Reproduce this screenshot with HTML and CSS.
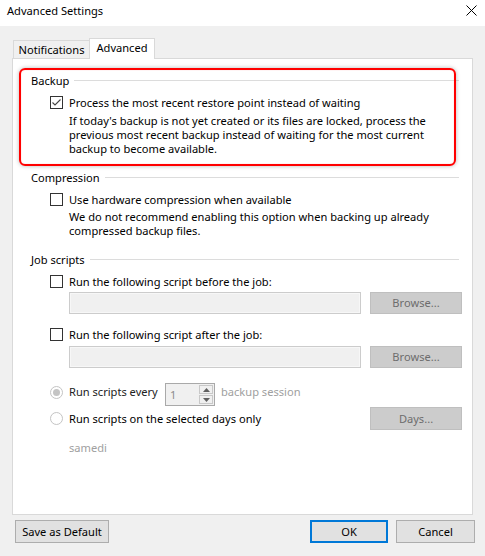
FILE: index.html
```html
<!DOCTYPE html>
<html>
<head>
<meta charset="utf-8">
<title>Advanced Settings</title>
<link rel="stylesheet" href="styles.css">
</head>
<body>
<div class="window">
  <div class="titlebar">
    <span class="title">Advanced Settings</span>
    <svg class="close" width="11" height="11" viewBox="0 0 11 11"><path d="M0.5 0.5 L10.5 10.5 M10.5 0.5 L0.5 10.5" stroke="#000" stroke-width="1" fill="none"/></svg>
  </div>
  <div class="main">
    <div class="tabs">
      <div class="tab">Notifications</div>
      <div class="tab active">Advanced</div>
    </div>
    <div class="panel">
      <div class="highlight"></div>

      <div class="group-head"><span>Backup</span><i class="rule"></i></div>
      <div class="opt">
        <span class="cb"><svg width="13" height="13" viewBox="0 0 13 13"><path d="M2.5 6.5 L5 9 L10.5 3.5" stroke="#444" stroke-width="1.1" fill="none"/></svg></span>
        <span>Process the most recent restore point instead of waiting</span>
      </div>
      <div class="desc">If today's backup is not yet created or its files are locked, process the<br>previous most recent backup instead of waiting for the most current<br>backup to become available.</div>

      <div class="group-head sec"><span>Compression</span><i class="rule"></i></div>
      <div class="opt">
        <span class="cb"></span>
        <span>Use hardware compression when available</span>
      </div>
      <div class="desc tight">We do not recommend enabling this option when backing up already<br>compressed backup files.</div>

      <div class="group-head sec"><span>Job scripts</span><i class="rule"></i></div>
      <div class="opt">
        <span class="cb"></span>
        <span>Run the following script before the job:</span>
      </div>
      <div class="field-row">
        <div class="field"></div>
        <div class="btn-dis">Browse...</div>
      </div>
      <div class="opt opt-after">
        <span class="cb"></span>
        <span>Run the following script after the job:</span>
      </div>
      <div class="field-row field-after">
        <div class="field"></div>
        <div class="btn-dis">Browse...</div>
      </div>

      <div class="radio-row">
        <span class="radio on"></span>
        <span class="rlabel">Run scripts every</span>
        <div class="spinner">
          <span class="spin-val">1</span>
          <div class="spin-btns">
            <span class="spin-up"><svg width="7" height="4" viewBox="0 0 7 4"><path d="M0 4 L3.5 0 L7 4 Z" fill="#606060"/></svg></span>
            <span class="spin-down"><svg width="7" height="4" viewBox="0 0 7 4"><path d="M0 0 L3.5 4 L7 0 Z" fill="#606060"/></svg></span>
          </div>
        </div>
        <span class="muted">backup session</span>
      </div>
      <div class="radio-row days-row">
        <span class="radio"></span>
        <span>Run scripts on the selected days only</span>
        <div class="btn-dis push">Days...</div>
      </div>
      <div class="samedi muted">samedi</div>
    </div>
  </div>
  <div class="footer">
    <div class="btn save">Save as Default</div>
    <div class="btn ok">OK</div>
    <div class="btn cancel">Cancel</div>
  </div>
</div>
</body>
</html>
```
FILE: styles.css
```css
* { box-sizing: border-box; }
html, body { margin: 0; padding: 0; }
body {
  font-family: "Noto Sans", "Open Sans", sans-serif;
  font-size: 11.1px;
  color: #000;
  background: #f0f0f0;
}
.window {
  width: 485px;
  height: 556px;
  background: #f0f0f0;
  display: flex;
  flex-direction: column;
  overflow: hidden;
}
.titlebar {
  height: 26px;
  background: #fff;
  display: flex;
  align-items: flex-start;
  justify-content: space-between;
  padding: 2px 8px 0 7px;
}
.title { line-height: 18px; }
.close { margin-top: 3px; }

.main { padding: 12px 12px 0 12px; }
.tabs {
  display: flex;
  align-items: flex-end;
  height: 20px;
  padding-left: 1px;
  position: relative;
  z-index: 2;
}
.tab {
  height: 18px;
  width: 77px;
  border: 1px solid #d9d9d9;
  border-bottom: none;
  background: #f0f0f0;
  text-align: center;
  line-height: 17px;
}
.tab.active {
  width: 66px;
  height: 21px;
  margin-left: -1px;
  margin-bottom: -1px;
  background: #fff;
  line-height: 18px;
}
.panel {
  position: relative;
  height: 457px;
  border: 1px solid #d9d9d9;
  background: #fff;
  padding: 12px 10px 0 18px;
}
.highlight {
  position: absolute;
  left: 6px;
  top: 9px;
  width: 437px;
  height: 98px;
  border: 2px solid #ff0000;
  border-radius: 6px;
  box-shadow: 0 0 4px rgba(0,0,0,0.28), inset 0 0 1px rgba(255,80,80,0.6);
  pointer-events: none;
}
.group-head {
  height: 18px;
  display: flex;
  align-items: center;
  margin-right: 3px;
}
.group-head.sec { margin-top: 12px; }
.rule {
  flex: 1;
  height: 1px;
  background: #dcdcdc;
  margin-left: 5px;
}
.opt {
  height: 22px;
  margin-top: 2px;
  margin-left: 19px;
  display: flex;
  align-items: center;
}
.opt-after { margin-top: 9px; }
.cb {
  width: 13px;
  height: 13px;
  border: 1px solid #333;
  background: #fff;
  margin-right: 6px;
  display: flex;
}
.cb svg { margin: -1px; }
.desc {
  margin-left: 38px;
  margin-top: 1px;
  line-height: 14px;
}
.desc.tight { margin-top: 0; }
.field-row {
  margin-left: 38px;
  display: flex;
  gap: 9px;
  height: 22px;
}
.field-after { margin-top: 1px; }
.field {
  width: 292px;
  height: 22px;
  background: #f0f0f0;
  border: 1px solid #cccccc;
  box-shadow: inset 0 0 0 1px #f7f7f7;
}
.btn-dis {
  width: 92px;
  height: 22px;
  background: #cccccc;
  border: 1px solid #bfbfbf;
  color: #6d6d6d;
  text-align: center;
  line-height: 20px;
}
.radio-row {
  margin-left: 19px;
  margin-top: 13px;
  height: 24px;
  display: flex;
  align-items: flex-start;
  line-height: 22px;
}
.radio {
  width: 13px;
  height: 13px;
  border: 1px solid #c4c4c4;
  border-radius: 50%;
  background: #fff;
  margin: 5px 6px 0 0;
  display: flex;
  align-items: center;
  justify-content: center;
}
.radio.on::after {
  content: "";
  width: 7px;
  height: 7px;
  border-radius: 50%;
  background: #c4c4c4;
}
.rlabel { width: 96px; color: #222; }
.days-row { margin-top: 2px; height: 23px; align-items: center; line-height: 14px; }
.days-row .radio { margin-top: 0; }
.days-row .btn-dis { height: 23px; line-height: 21px; }
.push { margin-left: auto; }
.spinner {
  width: 50px;
  height: 23px;
  margin-top: 2px;
  border: 1px solid #a9a9a9;
  background: #f0f0f0;
  display: flex;
  justify-content: space-between;
  padding: 1px 1px 1px 4px;
}
.spin-val { color: #8c8c8c; line-height: 19px; }
.spin-btns {
  width: 14px;
  display: flex;
  flex-direction: column;
  gap: 1px;
}
.spin-btns span {
  flex: 1;
  background: #f0f0f0;
  border: 1px solid #c8c8c8;
  display: flex;
  align-items: center;
  justify-content: center;
}
.muted { color: #a0a0a0; }
.radio-row .muted { margin-left: 6px; }
.samedi {
  margin-left: 38px;
  margin-top: 11px;
  line-height: 14px;
}
.footer {
  display: flex;
  padding: 5px 10px 0 15px;
}
.btn {
  height: 23px;
  background: #e1e1e1;
  border: 1px solid #adadad;
  text-align: center;
  line-height: 21px;
}
.save { width: 94px; }
.ok {
  width: 78px;
  margin-left: auto;
  border: 2px solid #0078d7;
  line-height: 19px;
}
.cancel { width: 79px; margin-left: 8px; }
```
